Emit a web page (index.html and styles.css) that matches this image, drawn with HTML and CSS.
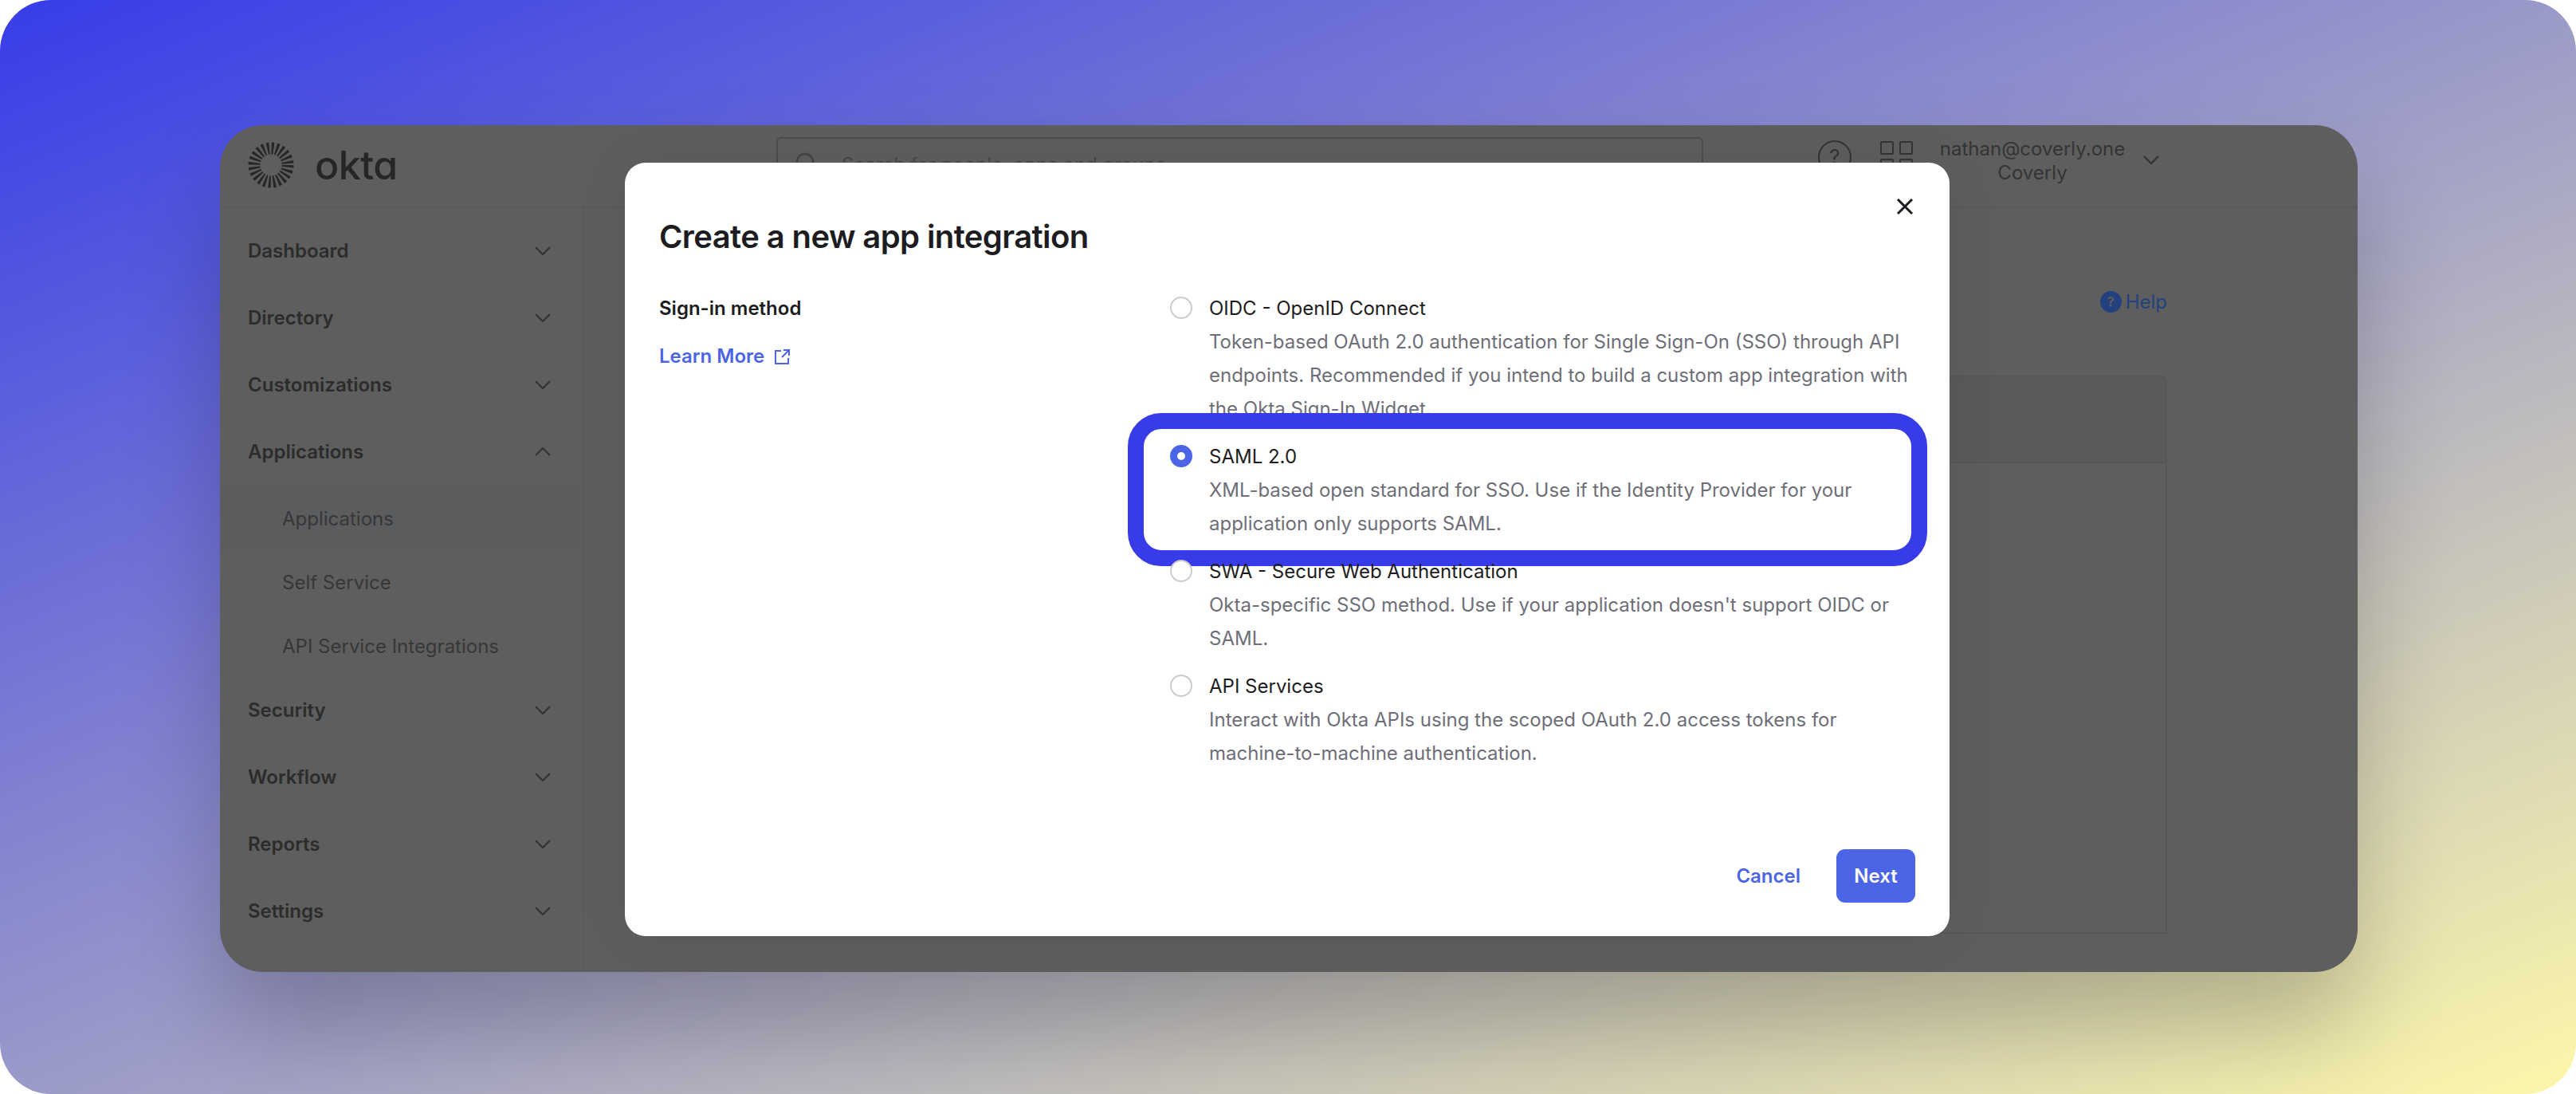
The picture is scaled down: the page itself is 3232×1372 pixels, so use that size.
FILE: index.html
```html
<!DOCTYPE html>
<html lang="en">
<head>
  <meta charset="UTF-8" />
  <title>Create a new app integration</title>
  <link rel="stylesheet" href="styles.css">
</head>
<body>

<div class="stage">
  <div class="app">

    <header class="topbar">
      <div class="logo">
        <svg class="sunburst" width="58" height="58" viewBox="0 0 58 58">
          <circle cx="29" cy="29" r="21" fill="none" stroke="#262626" stroke-width="15" stroke-dasharray="2.7 2.8" />
        </svg>
        <span class="wordmark">okta</span>
      </div>
      <div class="search">
        <svg class="search-icon" width="30" height="30" viewBox="0 0 30 30">
          <circle cx="12" cy="12" r="10" fill="none" stroke="#454545" stroke-width="2.5" />
          <path d="M19 19l8 8" stroke="#454545" stroke-width="2.5" />
        </svg>
        <span>Search for people, apps and groups</span>
      </div>
      <div class="help-circle">?</div>
      <div class="apps-grid">
        <i></i><i></i><i></i><i></i>
      </div>
      <div class="user">
        <div>nathan@coverly.one</div>
        <div>Coverly</div>
      </div>
      <svg class="chevron user-chevron" width="20" height="11" viewBox="0 0 20 11">
        <path d="M1 1l9 9 9-9" />
      </svg>
    </header>

    <div class="content">
      <nav class="sidebar">
        <div class="nav-item">Dashboard<svg class="chevron" width="20" height="11" viewBox="0 0 20 11"><path d="M1 1l9 9 9-9" /></svg></div>
        <div class="nav-item">Directory<svg class="chevron" width="20" height="11" viewBox="0 0 20 11"><path d="M1 1l9 9 9-9" /></svg></div>
        <div class="nav-item">Customizations<svg class="chevron" width="20" height="11" viewBox="0 0 20 11"><path d="M1 1l9 9 9-9" /></svg></div>
        <div class="nav-item">Applications<svg class="chevron" width="20" height="11" viewBox="0 0 20 11"><path d="M1 10l9-9 9 9" /></svg></div>
        <div class="sub-item active">Applications</div>
        <div class="sub-item">Self Service</div>
        <div class="sub-item">API Service Integrations</div>
        <div class="nav-item">Security<svg class="chevron" width="20" height="11" viewBox="0 0 20 11"><path d="M1 1l9 9 9-9" /></svg></div>
        <div class="nav-item">Workflow<svg class="chevron" width="20" height="11" viewBox="0 0 20 11"><path d="M1 1l9 9 9-9" /></svg></div>
        <div class="nav-item">Reports<svg class="chevron" width="20" height="11" viewBox="0 0 20 11"><path d="M1 1l9 9 9-9" /></svg></div>
        <div class="nav-item">Settings<svg class="chevron" width="20" height="11" viewBox="0 0 20 11"><path d="M1 1l9 9 9-9" /></svg></div>
      </nav>

      <main class="main">
        <div class="help-row">
          <span class="help-dot">?</span>
          <span>Help</span>
        </div>
        <div class="card">
          <div class="card-head"></div>
          <div class="card-body">
            <div class="card-col"></div>
          </div>
        </div>
      </main>
    </div>

    <!-- dialog sits on top of the dimmed app -->
    <section class="modal">
      <svg class="close" width="22" height="22" viewBox="0 0 22 22">
        <path d="M2 2l18 18M20 2L2 20" />
      </svg>
      <h1 class="modal-title">Create a new app integration</h1>

      <div class="modal-body">
        <div class="modal-side">
          <div class="side-label">Sign-in method</div>
          <a class="learn-more">
            Learn More
            <svg width="21" height="21" viewBox="0 0 21 21">
              <path d="M9 3H2v16h16v-7M12 2h7v7M19 2l-9 9" />
            </svg>
          </a>
        </div>

        <div class="options">
          <div class="option">
            <span class="radio"></span>
            <div>
              <div class="option-title">OIDC - OpenID Connect</div>
              <div class="option-desc">Token-based OAuth 2.0 authentication for Single Sign-On (SSO) through API endpoints. Recommended if you intend to build a custom app integration with the Okta Sign-In Widget.</div>
            </div>
          </div>
          <div class="option selected">
            <span class="radio checked"></span>
            <div>
              <div class="option-title">SAML 2.0</div>
              <div class="option-desc">XML-based open standard for SSO. Use if the Identity Provider for your application only supports SAML.</div>
            </div>
            <div class="highlight"></div>
          </div>
          <div class="option">
            <span class="radio"></span>
            <div>
              <div class="option-title">SWA - Secure Web Authentication</div>
              <div class="option-desc">Okta-specific SSO method. Use if your application doesn't support OIDC or SAML.</div>
            </div>
          </div>
          <div class="option">
            <span class="radio"></span>
            <div>
              <div class="option-title">API Services</div>
              <div class="option-desc">Interact with Okta APIs using the scoped OAuth 2.0 access tokens for machine-to-machine authentication.</div>
            </div>
          </div>
        </div>
      </div>

      <div class="modal-foot">
        <a class="cancel">Cancel</a>
        <button class="next" type="button">Next</button>
      </div>
    </section>

  </div>
</div>

</body>
</html>
```

FILE: styles.css
```css
* {
  box-sizing: border-box;
}

body {
  margin: 0;
  background-color: #fff;
  font-family: Inter, "Liberation Sans", sans-serif;
  font-size: 24px;
}

.stage {
  width: 3232px;
  height: 1372px;
  padding: 157px 274px 0 276px;
  border-radius: 64px;
  background: linear-gradient(to bottom right, #373ce8, #fdf7aa);
  overflow: hidden;
}

.app {
  position: relative;
  width: 2682px;
  height: 1062px;
  border-radius: 54px;
  background-color: #5e5e5e;
  box-shadow: 0 70px 120px rgba(0, 0, 0, 0.22);
}

/* top bar */
.topbar {
  display: flex;
  align-items: flex-start;
  height: 103px;
  padding: 15px 0 0 35px;
  border-bottom: 1px solid #575757;
  color: #343434;
}

.logo {
  display: flex;
  align-items: center;
  gap: 26px;
  width: 663px;
  height: 70px;
}

.wordmark {
  font-size: 50px;
  font-weight: 500;
  letter-spacing: -0.5px;
  color: #262626;
  font-feature-settings: "cv11";
}

.search {
  display: flex;
  align-items: center;
  gap: 28px;
  width: 1163px;
  height: 68px;
  padding-left: 22px;
  border: 2px solid #4c4c4c;
  border-radius: 6px;
  color: #484848;
}

.search-icon {
  flex: none;
}

.help-circle {
  width: 42px;
  height: 42px;
  margin: 4px 0 0 144px;
  border: 2.5px solid #343434;
  border-radius: 50%;
  font-size: 26px;
  line-height: 37px;
  text-align: center;
}

.apps-grid {
  display: grid;
  grid-template-columns: 17px 17px;
  grid-auto-rows: 17px;
  gap: 5px 7px;
  margin: 5px 0 0 36px;
}

.apps-grid i {
  border: 2.5px solid #343434;
  border-radius: 2px;
}

.user {
  width: 236px;
  margin: 0 0 0 32px;
  line-height: 30px;
  text-align: center;
}

.chevron {
  flex: none;
  fill: none;
  stroke: #333;
  stroke-width: 2.2;
}

.user-chevron {
  margin: 23px 0 0 21px;
}

/* sidebar */
.content {
  display: flex;
  height: 959px;
}

.sidebar {
  flex: none;
  width: 457px;
  padding-top: 14px;
  border-right: 1px solid #575757;
}

.nav-item {
  display: flex;
  align-items: center;
  justify-content: space-between;
  height: 84px;
  padding: 0 41px 4px 35px;
  font-weight: 600;
  color: #2c2c2c;
}

.sub-item {
  display: flex;
  align-items: center;
  height: 80px;
  padding-left: 78px;
  color: #373737;
}

.sub-item.active {
  background-color: #5b5c5e;
}

/* page behind the dialog */
.main {
  flex: 1;
  min-width: 0;
  padding: 103px 239px 0 241px;
}

.help-row {
  display: flex;
  align-items: center;
  justify-content: flex-end;
  gap: 5px;
  height: 30px;
  color: #24417f;
}

.help-dot {
  width: 27px;
  height: 27px;
  border-radius: 50%;
  background-color: #24417f;
  color: #5e5e5e;
  font-size: 16px;
  font-weight: 700;
  line-height: 27px;
  text-align: center;
}

.card {
  height: 700px;
  margin-top: 78px;
  border: 2px solid #575757;
  border-radius: 8px 8px 0 0;
}

.card-head {
  height: 108px;
  border-bottom: 2px solid #555;
  background-color: #5a5a5a;
}

.card-body {
  height: 590px;
}

.card-col {
  width: 456px;
  height: 100%;
  border-right: 2px solid #565656;
}

/* dialog */
.modal {
  position: absolute;
  top: 47px;
  left: 508px;
  display: flex;
  flex-direction: column;
  width: 1662px;
  height: 970px;
  padding: 67px 43px 42px;
  border-radius: 26px;
  background-color: #fff;
  box-shadow: 0 0 70px rgba(0, 0, 0, 0.07);
}

.close {
  position: absolute;
  top: 44px;
  right: 45px;
  fill: none;
  stroke: #1d1d21;
  stroke-width: 3;
}

.modal-title {
  margin: 0 0 43px;
  font-size: 40px;
  font-weight: 600;
  line-height: 52px;
  letter-spacing: -0.6px;
  color: #1d1d21;
}

.modal-body {
  display: flex;
  flex: 1;
}

.modal-side {
  flex: none;
  width: 641px;
}

.side-label {
  font-weight: 600;
  line-height: 42px;
  color: #1d1d21;
}

.learn-more {
  display: flex;
  align-items: center;
  gap: 12px;
  margin-top: 18px;
  font-weight: 600;
  line-height: 42px;
  color: #4c64e6;
}

.learn-more svg {
  fill: none;
  stroke: #4c64e6;
  stroke-width: 2;
}

.option {
  position: relative;
  display: flex;
  gap: 21px;
  margin-bottom: 18px;
  line-height: 42px;
  width: 936px;
}

.radio {
  flex: none;
  width: 28px;
  height: 28px;
  margin-top: 6px;
  border: 2.5px solid #ccc;
  border-radius: 50%;
  background-color: #fff;
}

.radio.checked {
  border: 9px solid #4c64e6;
}

.option-title {
  color: #1d1d21;
}

.option-desc {
  color: #6e6e78;
}

.highlight {
  position: absolute;
  top: -34px;
  left: -53px;
  width: 1003px;
  height: 192px;
  border: 20px solid #373ce8;
  border-radius: 42px;
}

.modal-foot {
  display: flex;
  align-items: center;
  justify-content: flex-end;
  gap: 45px;
}

.cancel {
  font-weight: 600;
  color: #4c64e6;
}

.next {
  width: 99px;
  height: 67px;
  padding: 0;
  border: none;
  border-radius: 11px;
  background-color: #4c64e6;
  color: #fff;
  font-family: inherit;
  font-size: 24px;
  font-weight: 600;
}
```
